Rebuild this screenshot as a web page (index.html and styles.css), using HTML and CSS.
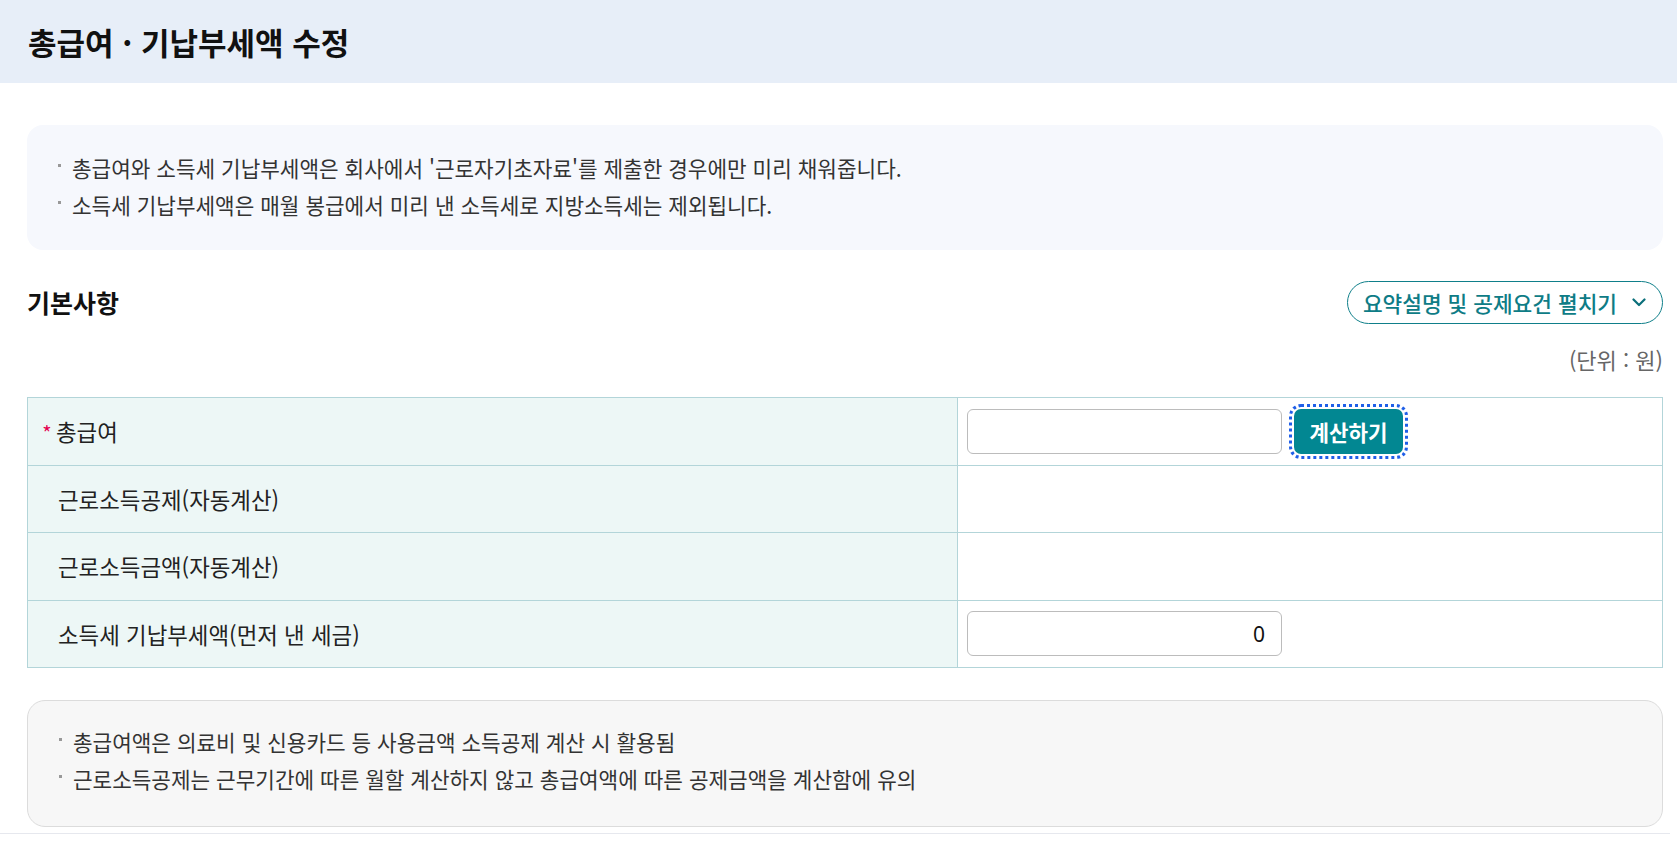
FILE: index.html
```html
<!DOCTYPE html>
<html lang="ko">
<head>
    <meta charset="UTF-8" />
    <meta name="viewport" content="width=device-width, initial-scale=1.0" />
    <title>총급여 · 기납부세액 수정</title>
    <link rel="stylesheet" href="styles.css">
</head>
<body>

    <div class="page-head">
        <h1>총급여 · 기납부세액 수정</h1>
    </div>

    <div class="content">

        <div class="notice">
            <ul>
                <li>총급여와 소득세 기납부세액은 회사에서 '근로자기초자료'를 제출한 경우에만 미리 채워줍니다.</li>
                <li>소득세 기납부세액은 매월 봉급에서 미리 낸 소득세로 지방소득세는 제외됩니다.</li>
            </ul>
        </div>

        <div class="section-head">
            <h2>기본사항</h2>
            <button type="button" class="toggle-btn">
                요약설명 및 공제요건 펼치기
                <svg width="14" height="9" viewBox="0 0 14 9"><path d="M1.5 1.5l5.5 5.5 5.5-5.5" fill="none" stroke="#0b6f7a" stroke-width="2.2" stroke-linecap="round" stroke-linejoin="round"/></svg>
            </button>
        </div>

        <p class="unit">(단위 : 원)</p>

        <table class="form-table">
            <colgroup>
                <col class="col-label">
                <col>
            </colgroup>
            <tr>
                <th><span class="req">*</span>총급여</th>
                <td>
                    <div class="field-row">
                        <input type="text" class="amount" />
                        <button type="button" class="calc-btn">계산하기</button>
                    </div>
                </td>
            </tr>
            <tr>
                <th>근로소득공제(자동계산)</th>
                <td></td>
            </tr>
            <tr>
                <th>근로소득금액(자동계산)</th>
                <td></td>
            </tr>
            <tr>
                <th>소득세 기납부세액(먼저 낸 세금)</th>
                <td><input type="text" class="amount" value="0" /></td>
            </tr>
        </table>

        <div class="notice notice-gray">
            <ul>
                <li>총급여액은 의료비 및 신용카드 등 사용금액 소득공제 계산 시 활용됨</li>
                <li>근로소득공제는 근무기간에 따른 월할 계산하지 않고 총급여액에 따른 공제금액을 계산함에 유의</li>
            </ul>
        </div>

    </div>

</body>
</html>
```

FILE: styles.css
```css
body {
    margin: 0;
    font-family: "Noto Sans CJK KR", "Noto Sans", sans-serif;
    color: #222;
    background: #fff;
}

.page-head {
    height: 83px;
    background-color: #e7eef8;
    display: flex;
    align-items: center;
    padding-left: 28px;
}

.page-head h1 {
    margin: 0;
    font-size: 31px;
    font-weight: bold;
    color: #111;
}

.content {
    width: 1670px;
    box-sizing: border-box;
    padding: 42px 7px 6px 27px;
    border-bottom: 1px solid #e6e8ee;
}

.notice {
    background-color: #f6f8fd;
    border-radius: 16px;
    padding: 24px 30px 27px;
}

.notice ul {
    list-style: none;
    margin: 0;
    padding: 0;
}

.notice li {
    position: relative;
    padding-left: 15px;
    font-size: 21.3px;
    line-height: 37px;
    color: #333;
}

.notice li::before {
    content: "";
    position: absolute;
    left: 1px;
    top: 15px;
    width: 3px;
    height: 3px;
    background-color: #999;
}

.notice-gray {
    margin-top: 32px;
    background-color: #f7f7f7;
    border: 1px solid #dcdcdc;
    padding: 22px 30px 29px 30px;
    border-radius: 18px;
}

.section-head {
    margin-top: 31px;
    display: flex;
    justify-content: space-between;
    align-items: center;
}

.section-head h2 {
    margin: 0 0 2px;
    font-size: 25px;
    font-weight: bold;
    color: #111;
}

.toggle-btn {
    height: 43px;
    padding: 0 16px 0 15px;
    border: 1px solid #0f7f8a;
    border-radius: 22px;
    background: #fff;
    color: #0e7c86;
    font-family: inherit;
    font-size: 21.4px;
    font-weight: 500;
    display: flex;
    align-items: center;
    gap: 15px;
    cursor: pointer;
}

.unit {
    margin: 23px 0 0;
    text-align: right;
    font-size: 22px;
    line-height: 24px;
    color: #666;
}

.form-table {
    margin-top: 26px;
    width: 100%;
    border-collapse: collapse;
    border: 1px solid #b3d5d9;
}

.form-table .col-label {
    width: 930px;
}

.form-table th,
.form-table td {
    height: 67.5px;
    border: 1px solid #b3d5d9;
    padding: 0;
    box-sizing: border-box;
}

.form-table th {
    background-color: #edf7f6;
    text-align: left;
    font-weight: normal;
    font-size: 22.4px;
    color: #222;
    padding-left: 30px;
}

.form-table td {
    padding-left: 9px;
}

.req {
    display: inline-block;
    width: 14px;
    margin-left: -18px;
    margin-right: 2px;
    color: #e5004f;
    font-size: 20px;
    text-align: center;
}

.field-row {
    display: flex;
    align-items: center;
    gap: 12px;
}

.amount {
    width: 315px;
    height: 45px;
    box-sizing: border-box;
    border: 1px solid #bcbcbc;
    border-radius: 6px;
    padding: 0 16px;
    text-align: right;
    font-family: "Noto Sans", sans-serif;
    font-size: 21px;
    color: #111;
}

.calc-btn {
    width: 109px;
    height: 45px;
    border: none;
    border-radius: 7px;
    background-color: #028792;
    color: #fff;
    font-family: inherit;
    font-size: 21.2px;
    font-weight: bold;
    outline: 3px dotted #1f5fe8;
    outline-offset: 2px;
    cursor: pointer;
}
```
